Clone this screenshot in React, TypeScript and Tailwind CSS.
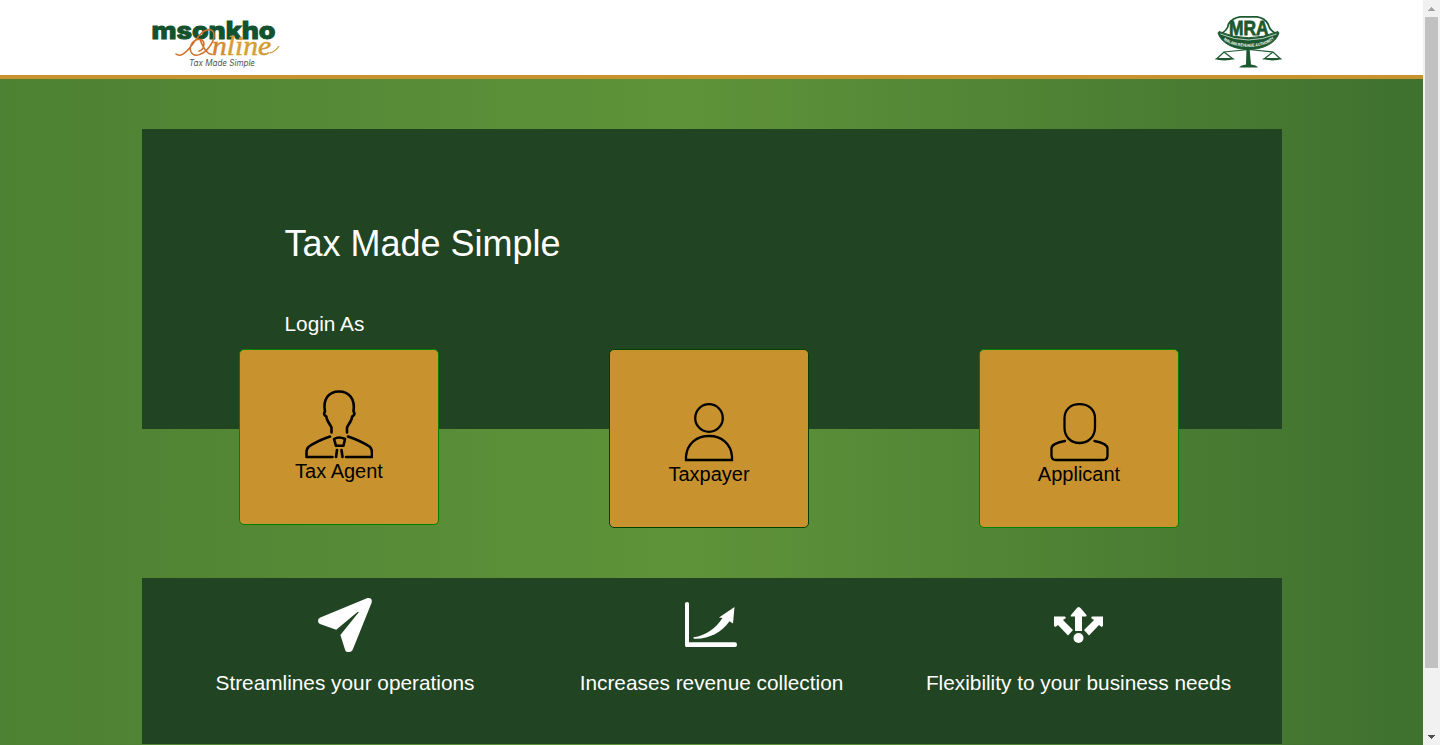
import type { ReactNode } from 'react';

function MsonkhoLogo() {
  return (
    <svg width="140" height="58" viewBox="0 0 140 58" className="block" role="img" aria-label="Msonkho Online">
      <defs>
        <linearGradient id="script" x1="0" x2="1">
          <stop offset="0" stopColor="#d07a2d" />
          <stop offset="0.4" stopColor="#d9a033" />
          <stop offset="1" stopColor="#cf9a2c" />
        </linearGradient>
      </defs>
      <text x="9.500" y="27" textLength="124" lengthAdjust="spacingAndGlyphs" fill="#12522f" stroke="#12522f" strokeWidth="1" className="font-['Inter'] text-[24px] font-extrabold">msonkho</text>
      <path d="M34 42C38 45.500 44 41 50 33C57 23 61 18 67 17.500C74 18 73 27 68 34C62 43 52 46 49 40C46 33 53 26 59 27.500C64 30 62 38 57 39M58 28C61 34 64 42 70 42.500" fill="none" stroke="#d0702b" strokeWidth="1.500" strokeLinecap="round" />
      <text x="70" y="43" textLength="59" lengthAdjust="spacingAndGlyphs" fill="url(#script)" stroke="url(#script)" strokeWidth=".5" className="font-['Liberation_Serif'] text-[28px] italic">nline</text>
      <path d="M128 41Q133 40 137 34" fill="none" stroke="#d2a033" strokeWidth="1.300" />
      <text x="47" y="54" textLength="66" lengthAdjust="spacingAndGlyphs" fill="#555" className="font-['Inter'] text-[8.500px] italic">Tax Made Simple</text>
    </svg>
  );
}

function AuthorityLogo() {
  return (
    <svg width="70" height="54" viewBox="0 0 70 54" className="block" role="img" aria-label="Malawi Revenue Authority">
      <path d="M7 19C12 17 15 13 15.500 9C18 5 22 2.500 27 1.800H44C49 2.500 53 5 55 9C56 13 59 17 64 19" fill="none" stroke="#1c5930" strokeWidth="1.800" />
      <text x="16" y="20" fill="#1c5930" stroke="#1c5930" strokeWidth=".8" className="font-['Liberation_Sans'] text-[21px] font-bold" textLength="39.500" lengthAdjust="spacingAndGlyphs">MRA</text>
      <path d="M6 16.500Q35.500 29 65 16.500L66 18C59 40 12 40 5 18Z" fill="#1c5930" stroke="#1c5930" strokeLinejoin="round" />
      <path d="M7.500 19Q35.500 31 63.500 19" fill="none" stroke="#fff" strokeWidth=".7" />
      <path id="arc" d="M10 24C20 34.500 51 34.500 61 24" fill="none" />
      <text fill="#fff" className="font-['Liberation_Sans'] text-[4.300px] font-bold"><textPath href="#arc" startOffset="1" textLength="54" lengthAdjust="spacingAndGlyphs">MALAWI REVENUE AUTHORITY</textPath></text>
      <path d="M11 37L35.500 34.500L60 37M3.500 44L11 37L20 44ZM51 44L60 37L67.500 44Z" fill="none" stroke="#1c5930" strokeWidth="1.200" />
      <path d="M2 43H21.500Q17 45.500 11.500 45.500Q5 45.500 2 43M49.500 43H69Q65 45.500 59.500 45.500Q54 45.500 49.500 43" fill="#1c5930" />
      <path d="M33.500 33H36.500L38 49.500Q43.500 50 45 52.500H26Q28 50 33 49.500Z" fill="#1c5930" />
    </svg>
  );
}

function TaxAgentIcon() {
  return (
    <svg width="68" height="69" viewBox="0 0 68 69" fill="none" stroke="#000" strokeWidth="2.600" strokeLinecap="round" strokeLinejoin="round">
      <path d="M26.500 42.500V37.500C25.500 35 21.800 31 21.300 26.500Q18.500 25 19.300 22.500L20 21.500C17.500 9 24 1.500 34 1.500S50.500 9 48.500 21.500L49.200 22.500Q50 25 47.200 26.500C46.700 31 43 35 42 37.500V42.500" />
      <path d="M25 46.500Q12 51 4 56.500Q1.500 58.500 1.500 63V67H27.500M43 46.500Q56 51 64.500 56.500Q67 58.500 67 63V67H41M32 60L31 67M36.500 60L37.500 67" />
      <path d="M29 49Q34 46 40 49L38.500 55.800H31Z" />
    </svg>
  );
}

function TaxpayerIcon() {
  return (
    <svg width="50" height="59" viewBox="0 0 50 59" fill="none" stroke="#000" strokeWidth="2.300">
      <circle cx="25" cy="15" r="13.800" />
      <path d="M2 57V53.500C3 41 12 33 25 33S47 41 48 53.500V57Z" />
    </svg>
  );
}

function ApplicantIcon() {
  return (
    <svg width="60" height="59" viewBox="0 0 60 59" fill="none" stroke="#000" strokeWidth="2.300" strokeLinecap="round">
      <path d="M15.500 15.500C15.500 6.500 21.500 1.200 30.500 1.200S46 6.500 46 15.500V24.500C46 33.500 39.500 40 30.500 40S15.500 33.500 15.500 24.500Z" />
      <path d="M16 38C7.500 39.500 2.500 41.500 2.500 45.500V52.500Q2.500 57 7 57H54Q58.500 57 58.500 52.500V45.500C58.500 41.500 53.500 39.500 45.500 38" />
    </svg>
  );
}

function PlaneIcon() {
  return (
    <svg width="56" height="56" viewBox="0 0 56 56" fill="#fff">
      <path d="M50.500 1.100Q55.500 .5 54.700 5.500L36 52Q35 55 32 55H30.500Q28.500 55 28 52.500L23.400 38L41.500 15.500Q42 14.500 40.500 15L19.200 32.800L3 27Q1 26 1 23.700Q1 21.500 3.300 20.500Z" />
    </svg>
  );
}

function GrowthIcon() {
  return (
    <svg width="56" height="49" viewBox="0 0 56 49" fill="#fff">
      <path d="M1 2.500Q1 1 3 1Q5 1 5 2.500V41.300H51Q53 41.300 53 43.700Q53 46 51 46H2Q1 46 1 44Z" />
      <path d="M9.500 36.300C22 34.500 31 28 38.500 17L35 16.500L50.500 6L49 22.500L45.500 20.300C37 32 24 38.500 10 37.700Q9 37 9.500 36.300Z" />
    </svg>
  );
}

function FlexibilityIcon() {
  return (
    <svg width="52" height="38" viewBox="0 0 52 38" fill="#fff">
      <path d="M25.500 1Q27 1 28 2.500L33.500 9Q34 10.500 32.500 10.500H29V25H22V10.500H18.500Q17 10.500 18 9L23.500 2.500Q24.500 1 25.500 1Z" />
      <path d="M1 10.500H12L13 12L10 14L20 24L15 29.500L5 19L2.500 21L1 20ZM50 10.500H39L38 12L41 14L31 24L36 29.500L46 19L48.500 21L50 20Z" />
      <circle cx="25.500" cy="32" r="5" />
    </svg>
  );
}

function LoginCard({ label, border, pad, children }: { label: string; border: string; pad: string; children: ReactNode }) {
  return (
    <a href="#" className={`flex w-[200px] flex-col items-center rounded-[5px] border bg-[#c8932e] text-[20px] text-black ${border} ${pad}`}>
      {children}
      <span className="-mt-px leading-[26px]">{label}</span>
    </a>
  );
}

function Benefit({ label, children }: { label: string; children: ReactNode }) {
  return (
    <div className="flex flex-col items-center pt-[18px]">
      <div className="flex h-[58px] items-center justify-center">{children}</div>
      <h3 className="mt-[14px] text-[20.800px] leading-[30px] whitespace-nowrap">{label}</h3>
    </div>
  );
}

function Scrollbar() {
  return (
    <div className="flex h-full w-[17px] shrink-0 flex-col items-center bg-[#f1f1f1]">
      <div className="flex h-[17px] shrink-0 items-center">
        <svg width="7" height="4" viewBox="0 0 7 4" className="block" shapeRendering="crispEdges"><path d="M3 0H4V1H5V2H6V3H7V4H0V3H1V2H2V1H3Z" fill="#a3a3a3" /></svg>
      </div>
      <div className="h-[651px] w-[13px] bg-[#c1c1c1]" />
      <div className="flex-1" />
      <div className="flex h-[17px] shrink-0 items-center">
        <svg width="7" height="4" viewBox="0 0 7 4" className="block" shapeRendering="crispEdges"><path d="M0 0H7V1H6V2H5V3H4V4H3V3H2V2H1V1H0Z" fill="#505050" /></svg>
      </div>
    </div>
  );
}

export default function App() {
  return (
    <div className="flex h-[745px] w-[1440px] overflow-hidden font-['Liberation_Sans',Arial,sans-serif]">
      <div className="flex min-w-0 flex-1 flex-col bg-[linear-gradient(90deg,#4d8133_0%,#5f9339_48%,#3f712f_100%)]">
        <header className="h-[79px] shrink-0 border-b-4 border-[#c8932e] bg-white">
          <div className="ml-[142px] flex w-[1141px] justify-between">
            <div className="pt-[12px]"><MsonkhoLogo /></div>
            <div className="pt-[15px]"><AuthorityLogo /></div>
          </div>
        </header>
        <main className="mt-[50px] ml-[142px] w-[1140px] text-white">
          <section className="h-[300px] bg-[#214423] pt-[95px] pl-[142.500px]">
            <h1 className="text-[36px] leading-[40px]">Tax Made Simple</h1>
            <h2 className="mt-[45px] text-[20.800px] leading-[30px]">Login As</h2>
          </section>
          <section className="-mt-[80px] ml-[97px] flex h-[179px] items-start gap-[170px]">
            <LoginCard label="Tax Agent" border="border-[#008000]" pad="h-[176px] pt-[40px]"><TaxAgentIcon /></LoginCard>
            <LoginCard label="Taxpayer" border="border-[#004000]" pad="h-[179px] pt-[53px]"><TaxpayerIcon /></LoginCard>
            <LoginCard label="Applicant" border="border-[#008000]" pad="h-[179px] pt-[53px]"><ApplicantIcon /></LoginCard>
          </section>
          <section className="mt-[50px] grid h-[166px] grid-cols-[366px_367px_367px] bg-[#214423] pl-[20px]">
            <Benefit label="Streamlines your operations"><PlaneIcon /></Benefit>
            <Benefit label="Increases revenue collection"><GrowthIcon /></Benefit>
            <Benefit label="Flexibility to your business needs"><FlexibilityIcon /></Benefit>
          </section>
        </main>
      </div>
      <Scrollbar />
    </div>
  );
}
